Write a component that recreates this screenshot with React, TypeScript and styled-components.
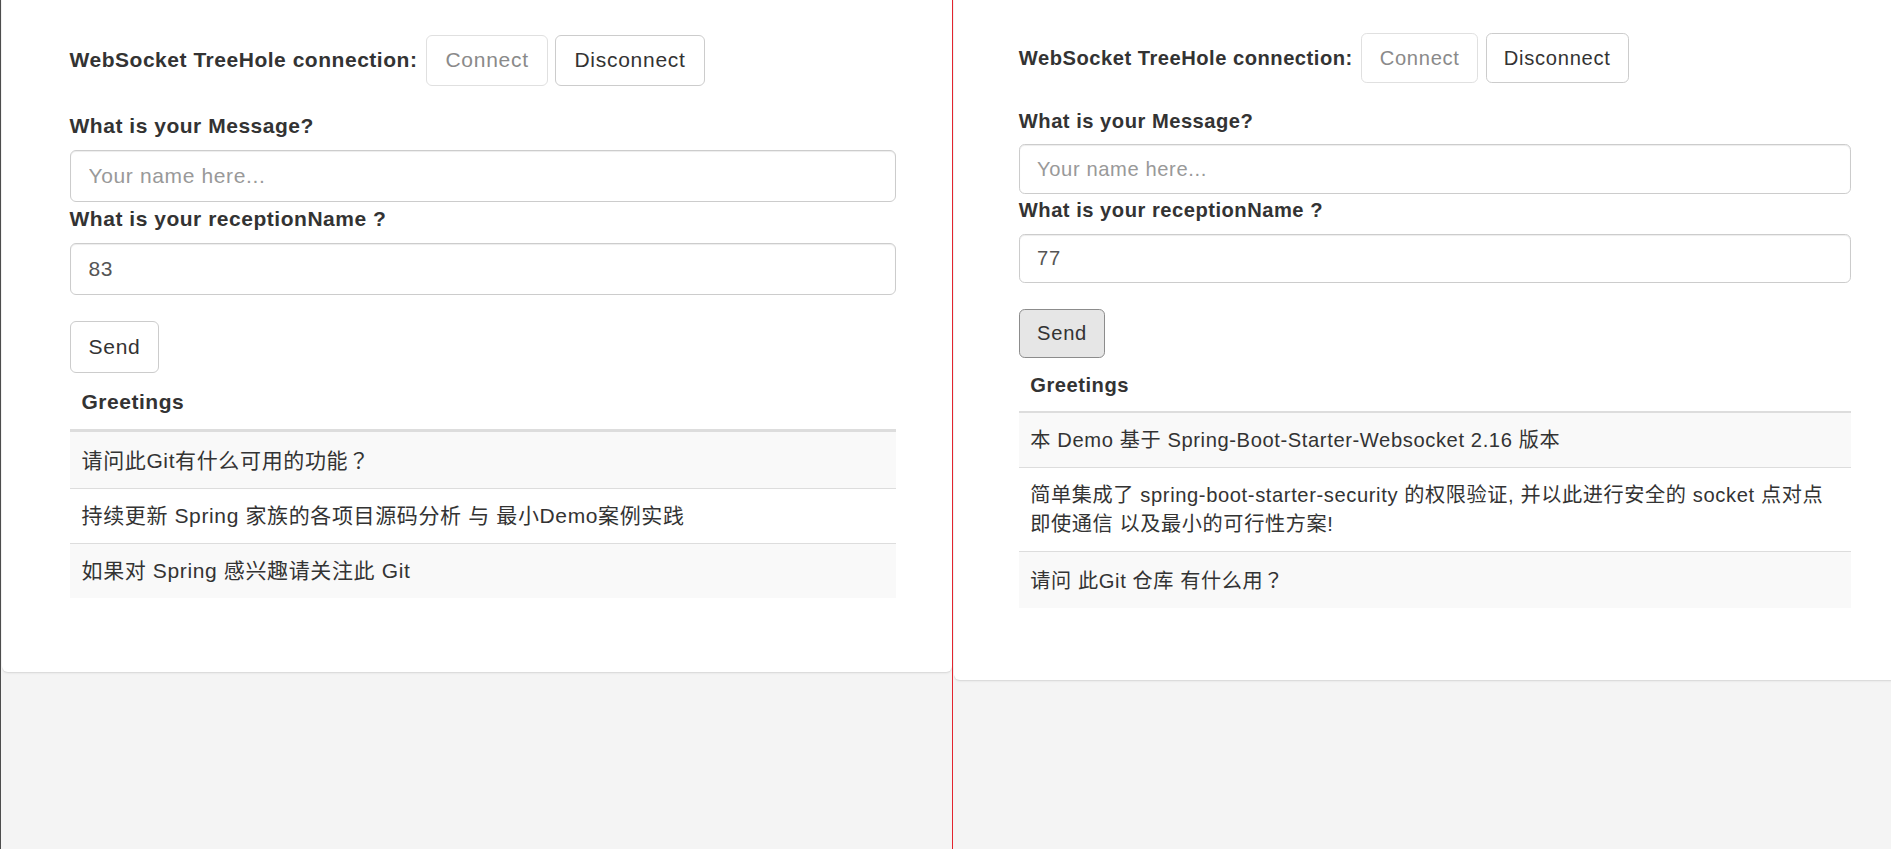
import React from "react";
import styled, { createGlobalStyle, css } from "styled-components";

const GlobalStyle = createGlobalStyle`
  html, body { margin: 0; padding: 0; }
  body { background: #f4f4f4; overflow: hidden; }
  * { box-sizing: border-box; }
`;

type S = { $s: number };
const u = (n: number) => (p: S) => `${(n * p.$s).toFixed(2)}px`;

const Screen = styled.div`
  display: flex;
  width: 1891px;
  height: 849px;
  overflow: hidden;
  background: #f4f4f4;
  font-family: "Liberation Sans", Arial, "Noto Sans CJK SC", sans-serif;
  color: #333;
`;

const Pane = styled.div<{ $left?: boolean }>`
  flex: ${(p) => (p.$left ? "0 0 952px" : "1 1 auto")};
  min-width: 0;
  overflow: hidden;
  padding-left: 1px;
  background: #f4f4f4;
  ${(p) =>
    p.$left &&
    css`
      border-left: 1px solid #4d4d4d;
    `}
`;

const Divider = styled.div`
  flex: 0 0 1px;
  background: #e3242e;
`;

const Card = styled.div<S & { $padRight: number; $overhang: number }>`
  background: #fff;
  border-radius: 0 0 ${u(4)} ${u(4)};
  box-shadow: 0 1px 1px rgba(0, 0, 0, 0.07), 0 2px 2px rgba(0, 0, 0, 0.04);
  padding: ${u(23.3)} ${(p) => p.$padRight}px ${u(49.7)} ${u(45)};
  margin-right: ${(p) => -p.$overhang}px;
  font-size: ${u(14)};
  line-height: ${u(20)};
  letter-spacing: 0.03em;
`;

const ConnRow = styled.div<S>`
  display: flex;
  align-items: center;
  height: ${u(34)};
`;

const InlineLabel = styled.span<S>`
  font-weight: bold;
  letter-spacing: 0.025em;
  margin-right: ${u(6)};
  white-space: nowrap;
`;

const Btn = styled.button<S & { $state?: "disabled" | "active" }>`
  font-family: inherit;
  font-size: ${u(14)};
  line-height: ${u(20)};
  letter-spacing: 0.035em;
  height: ${u(34.4)};
  padding: ${u(6)} ${u(12)};
  border: 1px solid #ccc;
  border-radius: ${u(4)};
  background: #fff;
  color: #333;
  cursor: pointer;
  & + & {
    margin-left: ${u(5.3)};
  }
  ${(p) =>
    p.$state === "disabled" &&
    css`
      border-color: #e0e0e0;
      color: #8a8a8a;
      cursor: not-allowed;
    `}
  ${(p) =>
    p.$state === "active" &&
    css`
      background: #e6e6e6;
      border-color: #8c8c8c;
    `}
`;

const FieldLabel = styled.label<S & { $top: number }>`
  display: block;
  font-weight: bold;
  letter-spacing: 0.025em;
  margin-top: ${(p) => (p.$top * p.$s).toFixed(2)}px;
  margin-bottom: ${u(6.2)};
  line-height: ${u(20)};
`;

const TextInput = styled.input<S>`
  display: block;
  width: 100%;
  height: ${u(34.4)};
  padding: ${u(6)} ${u(12)};
  font-family: inherit;
  font-size: ${u(14)};
  line-height: ${u(20)};
  letter-spacing: 0.03em;
  color: #555;
  background: #fff;
  border: 1px solid #ccc;
  border-radius: ${u(4)};
  box-shadow: inset 0 1px 1px rgba(0, 0, 0, 0.075);
  outline: none;
  &::placeholder {
    color: #999;
  }
`;

const SendRow = styled.div<S>`
  margin-top: ${u(17.6)};
`;

const Table = styled.table<S>`
  width: 100%;
  margin-top: ${u(1)};
  border-collapse: collapse;
  border-spacing: 0;
`;

const Th = styled.th<S>`
  text-align: left;
  font-weight: bold;
  letter-spacing: 0.025em;
  padding: ${u(8)};
  line-height: ${u(20)};
  border-bottom: ${u(2)} solid #ddd;
`;

const Tr = styled.tr`
  &:nth-child(odd) {
    background: #f9f9f9;
  }
`;

const Td = styled.td<S & { $padY: number; $line: number }>`
  padding: ${(p) => p.$padY}px ${u(8)};
  line-height: ${(p) => p.$line}px;
  border-top: 1px solid #ddd;
`;

const Punct = styled.span`
  font-family: "Noto Sans CJK TC", "Noto Sans CJK SC", sans-serif;
`;

type PanelProps = {
  s: number;
  padRight: number;
  overhang: number;
  rowPad: number;
  rowLine: number;
  reception: string;
  sendActive?: boolean;
  messages: React.ReactNode[];
};

function Panel({
  s,
  padRight,
  overhang,
  rowPad,
  rowLine,
  reception,
  sendActive,
  messages,
}: PanelProps) {
  return (
    <Card $s={s} $padRight={padRight} $overhang={overhang}>
      <ConnRow $s={s}>
        <InlineLabel $s={s}>WebSocket TreeHole connection:</InlineLabel>
        <Btn $s={s} $state="disabled" type="button">
          Connect
        </Btn>
        <Btn $s={s} type="button">
          Disconnect
        </Btn>
      </ConnRow>
      <FieldLabel $s={s} $top={16.7}>
        What is your Message?
      </FieldLabel>
      <TextInput $s={s} placeholder="Your name here..." />
      <FieldLabel $s={s} $top={1.5}>
        What is your receptionName ?
      </FieldLabel>
      <TextInput $s={s} defaultValue={reception} />
      <SendRow $s={s}>
        <Btn $s={s} $state={sendActive ? "active" : undefined} type="button">
          Send
        </Btn>
      </SendRow>
      <Table $s={s}>
        <thead>
          <tr>
            <Th $s={s}>Greetings</Th>
          </tr>
        </thead>
        <tbody>
          {messages.map((m, i) => (
            <Tr key={i}>
              <Td $s={s} $padY={rowPad} $line={rowLine}>
                {m}
              </Td>
            </Tr>
          ))}
        </tbody>
      </Table>
    </Card>
  );
}

export default function App() {
  return (
    <>
      <GlobalStyle />
      <Screen>
        <Pane $left>
          <Panel
            s={1.5}
            padRight={56}
            overhang={0}
            rowPad={12}
            rowLine={30}
            reception="83"
            messages={[
              <>
                请问此Git有什么可用的功能<Punct>？</Punct>
              </>,
              "持续更新 Spring 家族的各项目源码分析 与 最小Demo案例实践",
              "如果对 Spring 感兴趣请关注此 Git",
            ]}
          />
        </Pane>
        <Divider />
        <Pane>
          <Panel
            s={1.44}
            padRight={60}
            overhang={20}
            rowPad={12.5}
            rowLine={29}
            reception="77"
            sendActive
            messages={[
              "本 Demo 基于 Spring-Boot-Starter-Websocket 2.16 版本",
              "简单集成了 spring-boot-starter-security 的权限验证, 并以此进行安全的 socket 点对点即使通信 以及最小的可行性方案!",
              <>
                请问 此Git 仓库 有什么用<Punct>？</Punct>
              </>,
            ]}
          />
        </Pane>
      </Screen>
    </>
  );
}
